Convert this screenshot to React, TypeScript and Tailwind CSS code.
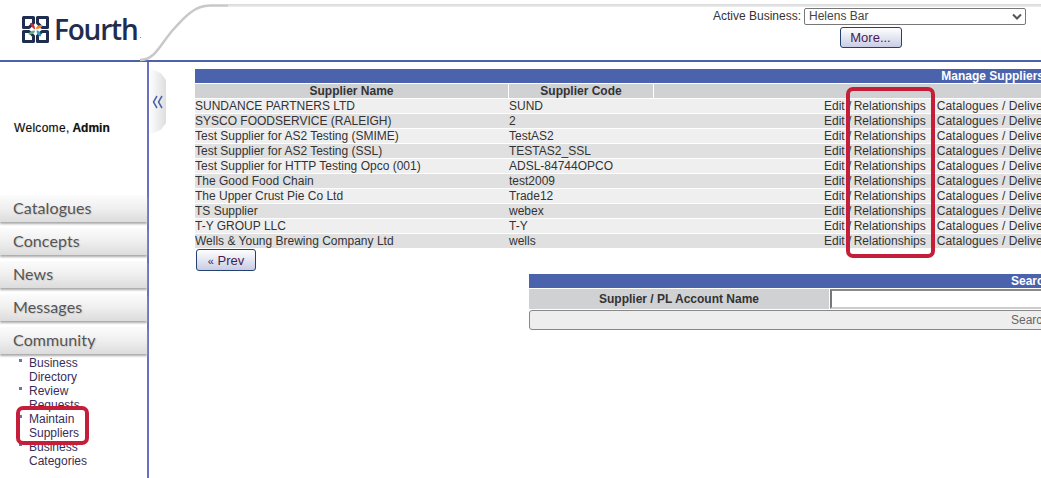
const rows: [string, string][] = [
  ["SUNDANCE PARTNERS LTD", "SUND"],
  ["SYSCO FOODSERVICE (RALEIGH)", "2"],
  ["Test Supplier for AS2 Testing (SMIME)", "TestAS2"],
  ["Test Supplier for AS2 Testing (SSL)", "TESTAS2_SSL"],
  ["Test Supplier for HTTP Testing Opco (001)", "ADSL-84744OPCO"],
  ["The Good Food Chain", "test2009"],
  ["The Upper Crust Pie Co Ltd", "Trade12"],
  ["TS Supplier", "webex"],
  ["T-Y GROUP LLC", "T-Y"],
  ["Wells & Young Brewing Company Ltd", "wells"],
];

const nav = ["Catalogues", "Concepts", "News", "Messages", "Community"];
const sub: [string, string][] = [
  ["Business", "Directory"],
  ["Review", "Requests"],
  ["Maintain", "Suppliers"],
  ["Business", "Categories"],
];

function Logo() {
  return (
    <div className="flex items-center gap-[5px]">
      <svg width="27" height="27" viewBox="0 0 27 27" fill="none">
        <g stroke="#1f2d50" strokeWidth="3" strokeLinejoin="round">
          <path d="M11.500 7L11.500 1.500H1.500V11.500H7Z" />
          <path d="M15.500 7L15.500 1.500H25.500V11.500H20Z" />
          <path d="M11.500 20L11.500 25.500H1.500V15.500H7Z" />
          <path d="M15.500 20L15.500 25.500H25.500V15.500H20Z" />
        </g>
        <path d="M8 7c3 0 5 2 5 6.500C10.500 12.500 9 10 8 7z" fill="#c8323c" />
        <path d="M14 13c0-2.500 2-4 6.500-4-.5 2.500-3 4-6.500 4z" fill="#ee8a2c" />
        <path d="M14.500 14.500c2.500 0 4.500 1.500 4.500 6-2.500-.5-4.500-2.500-4.500-6z" fill="#2f9fc0" />
        <path d="M13 14.500c0 2.500-2 4-6.500 4 .5-2.500 3-4 6.500-4z" fill="#5cb082" />
      </svg>
      <span className="font-['Open_Sans',sans-serif] text-[28px] leading-none font-semibold tracking-[-1.2px] text-[#1f2d50]">Fourth</span>
      <span className="-ml-[3px] mt-[16px] h-[1px] w-[1px] bg-[#8a93a8]" />
    </div>
  );
}

export default function App() {
  return (
    <div className="relative flex h-[478px] w-[1041px] flex-col overflow-hidden bg-white font-['Liberation_Sans',sans-serif] text-[12px] text-[#333]">
      <header className="relative flex h-[62px] shrink-0 border-b-2 border-[#4b63ad]">
        <div className="flex w-[150px] items-start pt-[15px] pl-[22px]"><Logo /></div>
        <svg className="absolute top-0 left-[140px]" width="90" height="62" viewBox="0 0 90 62">
          <path d="M0 60C15 60 20 45 32 31C45 16 55 5.500 70 5.500H90" fill="none" stroke="#c8c8c8" strokeWidth="2.500" />
        </svg>
        <div className="absolute top-[4px] right-0 left-[228px] h-[3px] bg-gradient-to-b from-[#d8d8d8] to-[#eeeeee]" />
        <div className="ml-auto flex w-[328px] flex-col items-center pt-[7px] pr-[15px]">
          <div className="flex items-center gap-[3px]">
            <span className="whitespace-nowrap">Active Business:</span>
            <div className="relative">
              <select defaultValue="Helens Bar" className="block h-[17px] w-[222px] appearance-none rounded-[2px] border border-[#777] bg-white pl-[4px] text-[12px] leading-[15px] text-[#444]">
                <option>Helens Bar</option>
              </select>
              <svg className="pointer-events-none absolute top-[5px] right-[4px]" width="10" height="7" viewBox="0 0 10 7" fill="none">
                <path d="M1 1.500L5 5.500L9 1.500" stroke="#555" strokeWidth="2" />
              </svg>
            </div>
          </div>
          <button className="mt-[2px] ml-[2px] h-[21px] w-[62px] rounded-[3px] border border-[#23426e] bg-gradient-to-b from-white to-[#c9cde4] text-[13px] text-[#4a1a50]">More...</button>
        </div>
      </header>
      <div className="flex min-h-0 flex-1">
        <aside className="flex w-[149px] shrink-0 flex-col border-r-2 border-[#6d6fc5]">
          <div className="flex h-[133px] shrink-0 items-center pb-[2px] pl-[14px]">
            <span className="font-bold text-[#111] [text-shadow:0_0_1px_#aaa]"><span className="font-normal tracking-[0.3px]">Welcome,</span> Admin</span>
          </div>
          <nav className="flex flex-col gap-[6px]">
            {nav.map((item) => (
              <div key={item} className="flex h-[27px] items-center bg-gradient-to-b from-[#fcfcfc] via-[#efefef] to-[#dcdcdc] pb-[1px] pl-[13px] font-['Lato',sans-serif] text-[16px] tracking-[0.1px] text-[#555] shadow-[0_2px_2px_#aaa] [text-shadow:1px_1px_1px_#ccc]">{item}</div>
            ))}
          </nav>
          <ul className="mt-[2px] flex flex-col pl-[19px] text-[12px] leading-[14px] text-[#3b2c55]">
            {sub.map(([a, b]) => (
              <li key={a + b} className="relative h-[28px] pl-[10px] before:absolute before:top-[3px] before:left-0 before:h-[3px] before:w-[3px] before:bg-[#6d6fc5]">{a}<br />{b}</li>
            ))}
          </ul>
        </aside>
        <div className="mt-[6px] flex h-[67px] w-[17px] shrink-0 items-center justify-center bg-gradient-to-r from-white to-[#dedede] [clip-path:polygon(0_0,70%_8%,100%_18%,100%_82%,70%_92%,0_100%)]">
          <svg width="11" height="14" viewBox="0 0 11 14" fill="none" stroke="#4b63ad" strokeWidth="1.500">
            <path d="M5 1L1.500 7L5 13" />
            <path d="M10 1L6.500 7L10 13" />
          </svg>
        </div>
        <main className="ml-[29px] min-w-0 flex-1 overflow-hidden pt-[7px]">
          <div className="w-[900px]">
            <div className="h-[14px] bg-[#4b63ad] pr-[51px] text-right text-[12px] leading-[14px] font-bold text-white">Manage Suppliers</div>
            <div className="mt-px flex h-[14px] gap-px text-center leading-[14px] font-bold">
              <div className="w-[313px] bg-[#d0d1d3]">Supplier Name</div>
              <div className="w-[144px] bg-[#d0d1d3]">Supplier Code</div>
              <div className="flex-1 bg-[#d0d1d3]" />
            </div>
            {rows.map(([name, code], i) => (
              <div key={name} className={`mt-px flex h-[14px] gap-px leading-[14px] ${i % 2 === 0 ? "bg-[#efefef]" : "bg-[#e0e0e0]"}`}>
                <div className="w-[313px] whitespace-nowrap">{name}</div>
                <div className="w-[144px] whitespace-nowrap">{code}</div>
                <div className="flex-1 whitespace-pre pl-[170px]">Edit / <span className="-ml-[1px]">Relationships</span><span className="ml-[2px]"> / </span><span className="-ml-[1px] tracking-[0.1px]">Catalogues / Delivery</span></div>
              </div>
            ))}
            <button className="mt-[1px] ml-px h-[22px] w-[60px] rounded-[3px] border border-[#23426e] bg-gradient-to-b from-white to-[#c9cde4] text-[13px] leading-none text-[#4a1a50]"><span className="text-[11px]">«</span> Prev</button>
            <div className="mt-[3px] ml-[334px] w-[566px]">
              <div className="h-[14px] bg-[#4b63ad] pl-[482px] leading-[14px] font-bold text-white">Search</div>
              <div className="mt-px flex h-[20px] gap-px">
                <div className="flex w-[300px] items-center justify-center bg-[#d0d1d3] font-bold">Supplier / PL Account Name</div>
                <div className="flex-1 border-2 border-r-0 border-t-[#8a8a8a] border-b-[#ccc] border-l-[#777] bg-white" />
              </div>
              <div className="mt-px h-[20px] rounded-l-[3px] border border-[#888] bg-[#eeeeee] pl-[481px] leading-[18px] text-[#666]">Search</div>
            </div>
          </div>
        </main>
      </div>
      <div className="pointer-events-none absolute top-[87px] left-[846px] h-[171px] w-[89px] rounded-[7px] border-[4px] border-[#c41e3a]" />
      <div className="pointer-events-none absolute top-[406px] left-[16px] h-[39px] w-[73px] rounded-[7px] border-[4px] border-[#c41e3a]" />
    </div>
  );
}
